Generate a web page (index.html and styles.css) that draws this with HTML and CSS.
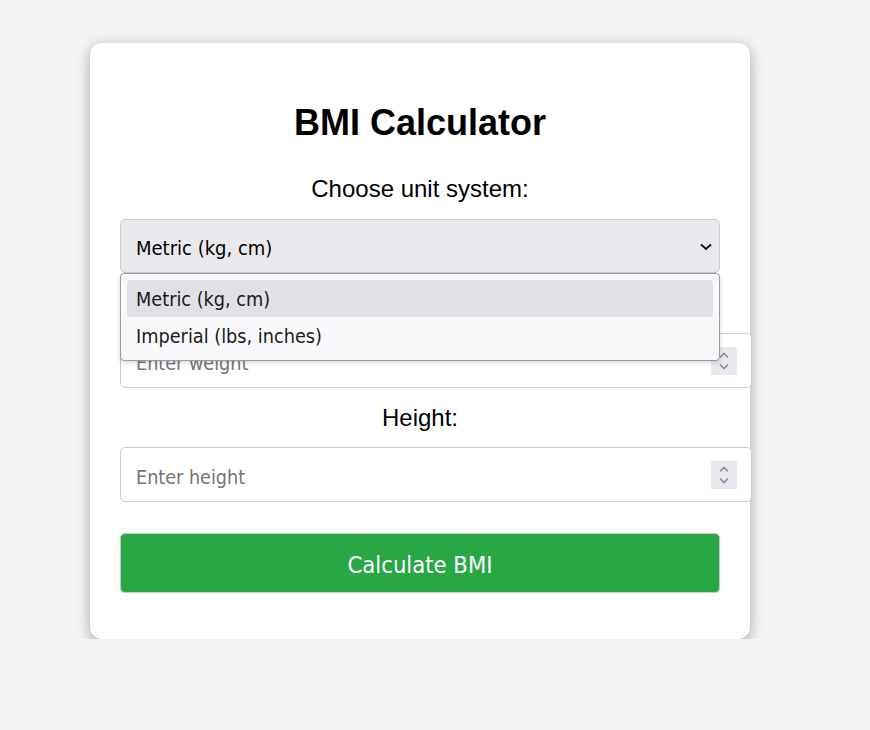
FILE: index.html
```html
<!DOCTYPE html>
<html lang="en">
<head>
<meta charset="utf-8">
<title>BMI Calculator</title>
<link rel="stylesheet" href="styles.css">
</head>
<body>
<div class="card">
  <h1 class="title">BMI Calculator</h1>
  <label class="label" for="unit">Choose unit system:</label>
  <div class="select-wrap">
    <select class="select" id="unit">
      <option>Metric (kg, cm)</option>
      <option>Imperial (lbs, inches)</option>
    </select>
    <svg class="select-arrow" width="12" height="8" viewBox="0 0 12 8"><path d="M1 1.5 L6 6 L11 1.5" fill="none" stroke="#111" stroke-width="2"/></svg>
    <ul class="menu">
      <li class="menu-item active">Metric (kg, cm)</li>
      <li class="menu-item">Imperial (lbs, inches)</li>
    </ul>
  </div>
  <label class="label label-gap" for="weight">Weight:</label>
  <div class="field">
    <input class="input" id="weight" type="number" placeholder="Enter weight">
    <span class="spin"><svg width="26" height="28" viewBox="0 0 26 28"><path d="M9 10.5 L13 6.5 L17 10.5 M9 17.5 L13 21.5 L17 17.5" fill="none" stroke="#8c8b98" stroke-width="1.7"/></svg></span>
  </div>
  <label class="label label-gap" for="height">Height:</label>
  <div class="field field-last">
    <input class="input" id="height" type="number" placeholder="Enter height">
    <span class="spin"><svg width="26" height="28" viewBox="0 0 26 28"><path d="M9 10.5 L13 6.5 L17 10.5 M9 17.5 L13 21.5 L17 17.5" fill="none" stroke="#8c8b98" stroke-width="1.7"/></svg></span>
  </div>
  <button class="button" type="button">Calculate BMI</button>
</div>
</body>
</html>
```
FILE: styles.css
```css
html, body {
  margin: 0;
  padding: 0;
  background: #f4f4f4;
}
body {
  padding: 43px 0 0 90px;
  font-family: "Liberation Sans", Arial, sans-serif;
}
.card {
  width: 600px;
  padding: 30px 30px 46px;
  background: #fff;
  border-radius: 12px;
  box-shadow: 0 3px 14px rgba(0, 0, 0, 0.32);
}
.title {
  margin: 30px 0 0;
  font-size: 36px;
  line-height: 40px;
  font-weight: bold;
  text-align: center;
  color: #000;
}
.label {
  display: block;
  margin-top: 32px;
  font-size: 24px;
  line-height: 28px;
  text-align: center;
  color: #000;
}
.label-gap {
  margin-top: 16px;
}
.select-wrap {
  position: relative;
  margin-top: 16px;
}
.select {
  display: block;
  width: 600px;
  height: 54px;
  box-sizing: border-box;
  margin: 0;
  padding: 4px 15px 0;
  border: 1px solid #ccc;
  border-radius: 5px;
  background: #e9e8ed;
  font-family: "DejaVu Sans Condensed", "DejaVu Sans", sans-serif;
  font-size: 20px;
  color: #000;
  -webkit-appearance: none;
  appearance: none;
}
.select-arrow {
  position: absolute;
  right: 8px;
  top: 24px;
}
.menu {
  position: absolute;
  left: 0;
  top: 54px;
  width: 586px;
  margin: 0;
  padding: 6px;
  list-style: none;
  background: #f9f9fb;
  border: 1px solid #9a9aa4;
  border-radius: 4px;
  box-shadow: 0 2px 4px rgba(0, 0, 0, 0.15);
  z-index: 5;
}
.menu-item {
  height: 37px;
  line-height: 39px;
  padding-left: 9px;
  border-radius: 4px;
  font-family: "DejaVu Sans Condensed", "DejaVu Sans", sans-serif;
  font-size: 19.7px;
  color: #1a1a1a;
}
.menu-item.active {
  background: #e1e0e6;
}
.field {
  position: relative;
  width: fit-content;
  margin-top: 16px;
}
.field-last {
  margin-top: 15px;
}
.input {
  display: block;
  width: 600px;
  margin: 0;
  padding: 18px 15px 12px;
  line-height: 23px;
  height: 23px;
  border: 1px solid #ccc;
  border-radius: 5px;
  background: #fff;
  font-family: "DejaVu Sans Condensed", "DejaVu Sans", sans-serif;
  font-size: 19.6px;
  color: #000;
  -moz-appearance: textfield;
}
.input::placeholder {
  color: #757575;
}
.input::-webkit-inner-spin-button,
.input::-webkit-outer-spin-button {
  -webkit-appearance: none;
  margin: 0;
}
.spin {
  position: absolute;
  right: 15px;
  top: 14px;
  width: 26px;
  height: 28px;
  background: #e9e8ee;
}
.spin svg {
  display: block;
}
.button {
  display: block;
  width: 600px;
  height: 60px;
  margin-top: 31px;
  padding: 4px 0 0;
  border: 1px solid #c9c9c9;
  border-radius: 5px;
  background: #28a745;
  color: #fff;
  font-family: "DejaVu Sans Condensed", "DejaVu Sans", sans-serif;
  font-size: 23.6px;
}
```
